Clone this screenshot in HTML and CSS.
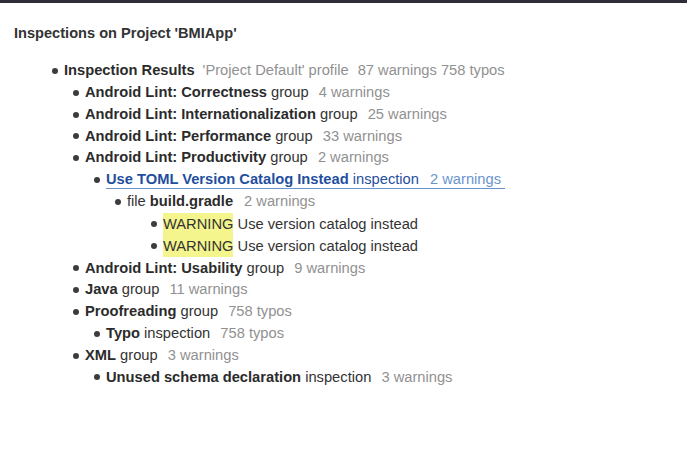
FILE: index.html
```html
<!DOCTYPE html>
<html>
<head>
<meta charset="utf-8">
<link rel="stylesheet" href="styles.css">
</head>
<body>
<div class="topbar"></div>
<main class="page">
  <h1 class="title">Inspections on Project 'BMIApp'</h1>
  <ul class="tree lvl1">
    <li><span class="row"><b>Inspection Results</b> <span class="muted first">'Project Default' profile</span> <span class="muted second">87 warnings 758 typos</span></span>
      <ul class="tree lvl">
        <li><span class="row"><b>Android Lint: Correctness</b> group <span class="muted">4 warnings</span></span></li>
        <li><span class="row"><b>Android Lint: Internationalization</b> group <span class="muted">25 warnings</span></span></li>
        <li><span class="row"><b>Android Lint: Performance</b> group <span class="muted">33 warnings</span></span></li>
        <li><span class="row"><b>Android Lint: Productivity</b> group <span class="muted">2 warnings</span></span>
          <ul class="tree lvl">
            <li><a class="row link" href="#"><b>Use TOML Version Catalog Instead</b> inspection <span class="muted-link">2 warnings</span></a>
              <ul class="tree lvl">
                <li><span class="row">file <b>build.gradle</b> <span class="muted wide">2 warnings</span></span>
                  <ul class="tree deep">
                    <li><span class="row tall"><span class="warn">WARNING</span> Use version catalog instead</span></li>
                    <li><span class="row tall"><span class="warn">WARNING</span> Use version catalog instead</span></li>
                  </ul>
                </li>
              </ul>
            </li>
          </ul>
        </li>
        <li><span class="row"><b>Android Lint: Usability</b> group <span class="muted">9 warnings</span></span></li>
        <li><span class="row"><b>Java</b> group <span class="muted">11 warnings</span></span></li>
        <li><span class="row"><b>Proofreading</b> group <span class="muted">758 typos</span></span>
          <ul class="tree lvl">
            <li><span class="row"><b>Typo</b> inspection <span class="muted">758 typos</span></span></li>
          </ul>
        </li>
        <li><span class="row"><b>XML</b> group <span class="muted">3 warnings</span></span>
          <ul class="tree lvl">
            <li><span class="row"><b>Unused schema declaration</b> inspection <span class="muted">3 warnings</span></span></li>
          </ul>
        </li>
      </ul>
    </li>
  </ul>
</main>
</body>
</html>
```
FILE: styles.css
```css
html, body {
  margin: 0;
  padding: 0;
  background: #ffffff;
}
body {
  font-family: "Liberation Sans", Arial, Helvetica, sans-serif;
  color: #333333;
}
.topbar {
  height: 3px;
  background: #2e2e38;
}
.page {
  padding: 20px 14px 0 14px;
}
.title {
  margin: 0 0 17px 0;
  font-size: 14.6px;
  font-weight: bold;
  line-height: 20px;
  color: #333333;
}
.tree {
  list-style: none;
  margin: 0;
  padding: 0;
}
.lvl1 {
  padding-left: 38px;
}
.lvl {
  padding-left: 21px;
}
.deep {
  padding-left: 36px;
}
.tree li {
  margin: 0;
}
.row {
  display: inline-flex;
  align-items: center;
  font-size: 14.7px;
  line-height: 21.6px;
  white-space: pre;
  color: #333333;
}
.row.tall {
  line-height: 22.4px;
}
.row::before {
  content: "";
  width: 6px;
  height: 6px;
  border-radius: 50%;
  background: #3c3c3c;
  margin-right: 6px;
  flex: none;
}
.row b {
  font-weight: bold;
  color: #2b2b2b;
}
.muted {
  color: #919191;
  margin-left: 6px;
}
.muted.first {
  margin-left: 8px;
}
.muted.second {
  margin-left: 9px;
}
.muted.wide {
  margin-left: 11px;
}
.link {
  position: relative;
  color: #1f4f9e;
  text-decoration: none;
}
.link b {
  color: #1f4f9e;
}
.link::after {
  content: "";
  position: absolute;
  left: 12px;
  right: 0;
  bottom: 2px;
  height: 1px;
  background: #6b93cf;
}
.muted-link {
  color: #6b93cf;
  margin-left: 7px;
  padding-right: 4px;
}
.warn {
  background: #f4f58c;
  color: #333333;
}
```
